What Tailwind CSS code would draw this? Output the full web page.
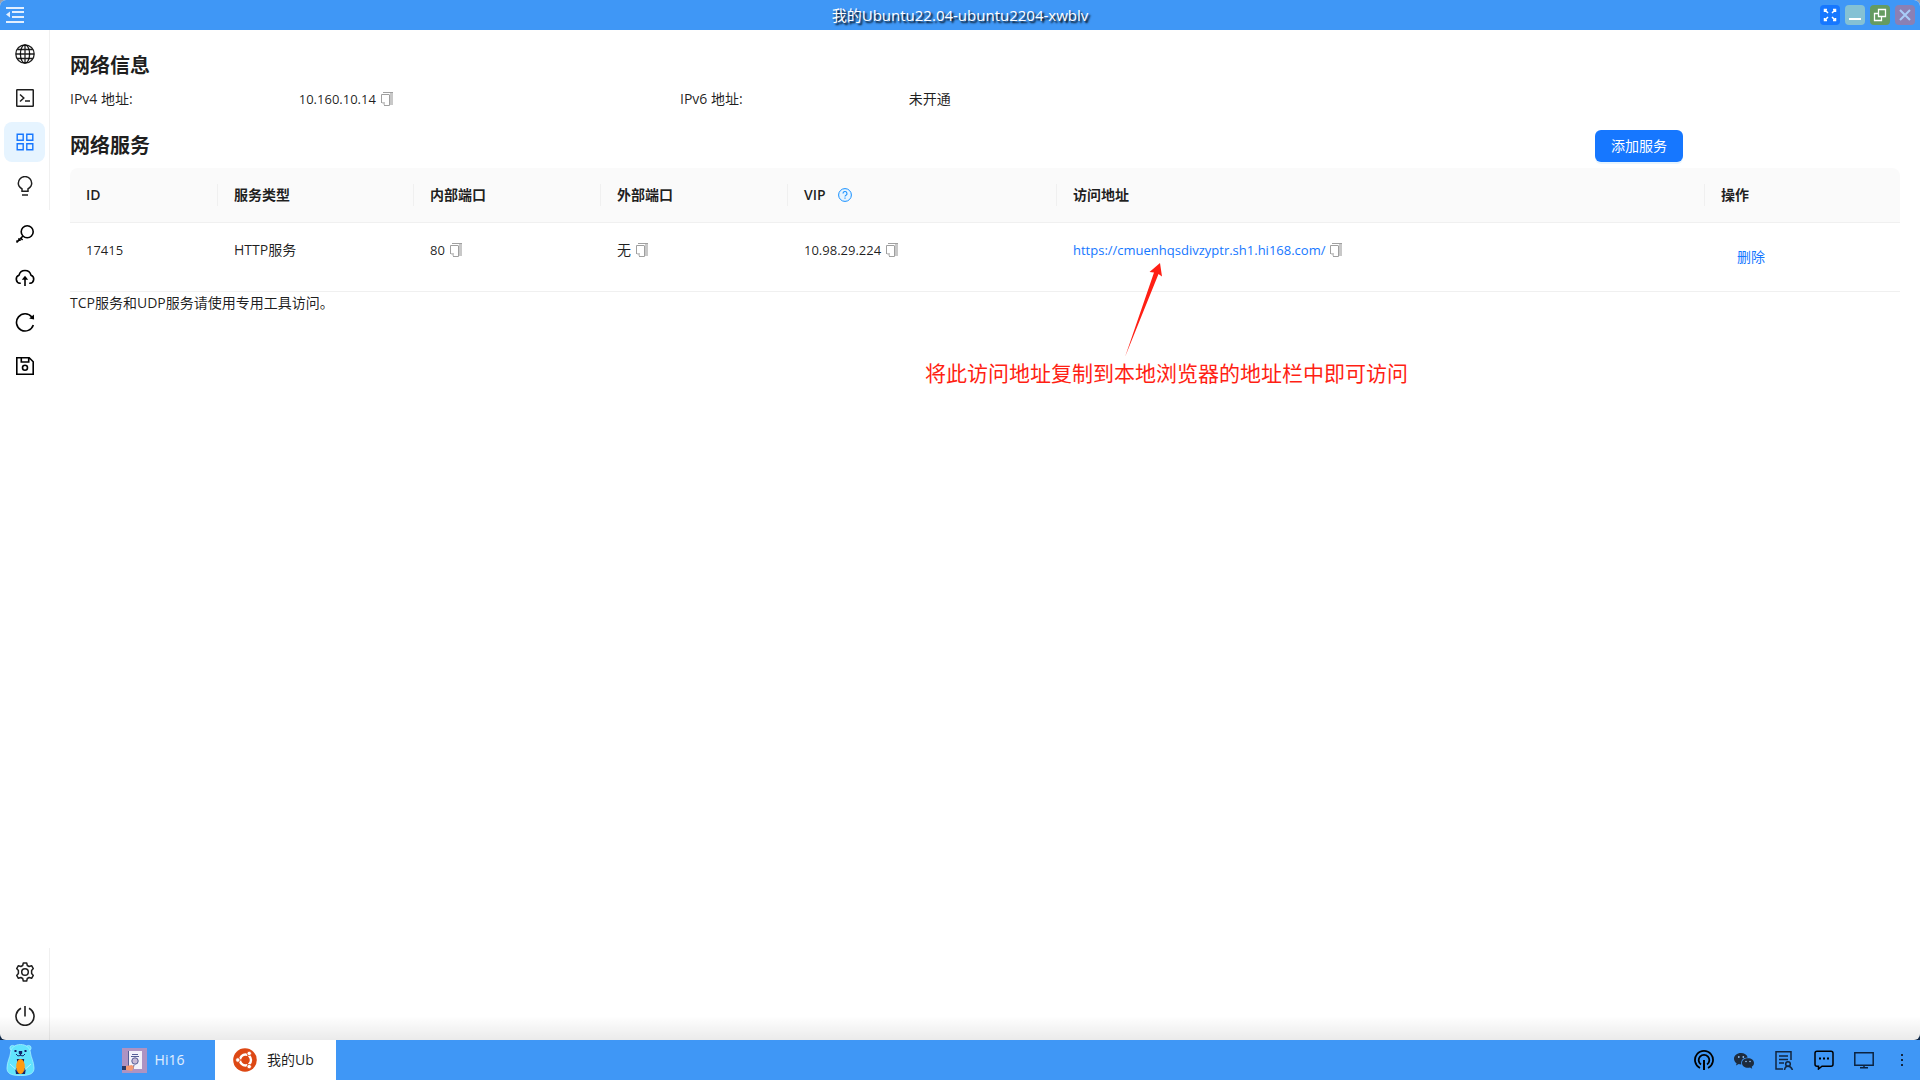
<!DOCTYPE html>
<html lang="zh-CN">
<head>
    <meta charset="UTF-8">
    <meta name="viewport" content="width=device-width, initial-scale=1.0">
    <title>我的Ubuntu22.04</title>
    <script src="https://cdn.jsdelivr.net/npm/@tailwindcss/browser@4"></script>
</head>
<body class="h-screen flex flex-col bg-linear-to-b from-gray-400 to-[#0b2545] font-['Open_Sans','Noto_Sans_CJK_SC',sans-serif] text-sm leading-[22px] text-black/88">
    <svg class="hidden">
        <symbol id="copy" viewBox="0 0 12 14">
            <path fill="#c8c8c8" d="M9 0h3v13H9zM0 10h4v4z"/>
            <path fill="none" stroke="#a0a0a0" d="M2 .5h10M.5 11V2.500h8"/>
            <path fill="none" stroke="#a0a0a0" d="M8.500 3v10.500H3"/>
        </symbol>
    </svg>

    <!-- window -->
    <div class="relative flex-1 min-h-0 flex flex-col rounded-md overflow-hidden bg-white">
        <header class="h-[30px] shrink-0 flex items-center justify-between px-[5px] bg-[#3f97f6]">
            <button class="w-[100px] text-white/85" aria-label="折叠菜单">
                <svg class="size-5" viewBox="0 0 20 20" fill="currentColor"><path d="M1 2h18v2H1zM7 6h12v2H7zM7 11h12v2H7zM1 16h18v2H1zM1 9.500l4-3v6z"/></svg>
            </button>
            <h1 class="text-[15px] text-white [text-shadow:2px_2px_2px_#000]">我的Ubuntu22.04-ubuntu2204-xwblv</h1>
            <div class="w-[100px] flex justify-end gap-[5px]">
                <button class="size-5 rounded bg-[#1677ff] text-white" aria-label="全屏">
                    <svg class="size-5" viewBox="0 0 20 20" fill="none" stroke="currentColor" stroke-width="1.500"><path d="M8 8L5 5M12 8l3-3M8 12l-3 3M12 12l3 3M4.500 7V4.500H7M13 4.500h2.500V7M4.500 13v2.500H7M13 15.500h2.500V13"/></svg>
                </button>
                <button class="size-5 rounded bg-[#84c1d4] text-white" aria-label="最小化">
                    <svg class="size-5" viewBox="0 0 20 20" fill="currentColor"><path d="M4 13h12v2H4z"/></svg>
                </button>
                <button class="size-5 rounded bg-[#659b60] text-white" aria-label="还原">
                    <svg class="size-5" viewBox="0 0 20 20" fill="none" stroke="currentColor" stroke-width="1.300"><path d="M8.500 4.500h7v7h-7zM11.500 11.500v4h-7v-7h4"/></svg>
                </button>
                <button class="size-5 rounded bg-[#8a80b4] text-[#a9cdf8]" aria-label="关闭">
                    <svg class="size-5" viewBox="0 0 20 20" fill="none" stroke="currentColor" stroke-width="2"><path d="M5 5l10 10M15 5L5 15"/></svg>
                </button>
            </div>
        </header>

        <div class="flex-1 min-h-0 flex">
            <!-- side menu -->
            <nav class="w-[50px] shrink-0 flex flex-col text-black/88">
                <div class="h-[180px] flex flex-col gap-1 pt-1 pl-1 pr-1 border-r border-[#f0f0f0]">
                    <button class="h-10 flex items-center justify-center rounded-lg" aria-label="网络">
                        <svg class="size-5" viewBox="0 0 20 20" fill="none" stroke="currentColor" stroke-width="1.300"><circle cx="10" cy="10" r="9.200"/><ellipse cx="10" cy="10" rx="4.600" ry="9.200"/><path d="M10 1v18M1 10h18M2.500 5.500h15M2.500 14.500h15"/></svg>
                    </button>
                    <button class="h-10 flex items-center justify-center rounded-lg" aria-label="终端">
                        <svg class="size-5" viewBox="0 0 20 20" fill="none" stroke="currentColor" stroke-width="1.500"><rect x="1.750" y="1.750" width="16.500" height="16.500" rx=".5"/><path d="M5 6.500L8.800 10 5 13.500M10 13h5"/></svg>
                    </button>
                    <button class="h-10 flex items-center justify-center rounded-lg bg-[#e6f4ff] text-[#1677ff]" aria-label="服务">
                        <svg class="size-5" viewBox="0 0 20 20" fill="none" stroke="currentColor" stroke-width="1.400"><path d="M2.200 2.200h6v6h-6zM11.800 2.200h6v6h-6zM2.200 11.800h6v6h-6zM11.800 11.800h6v6h-6z"/></svg>
                    </button>
                    <button class="h-10 flex items-center justify-center rounded-lg" aria-label="提示">
                        <svg class="size-5" viewBox="0 0 20 20" fill="none" stroke="currentColor" stroke-width="1.500"><path d="M7 15.200V12.800C5 11.700 3.300 9.800 3.300 7.300a6.700 6.700 0 0 1 13.400 0c0 2.500-1.700 4.400-3.700 5.500v2.400zM7 19h6"/></svg>
                    </button>
                </div>
                <div class="flex flex-col gap-1 pt-1 px-1 text-black">
                    <button class="h-10 flex items-center justify-center" aria-label="密钥">
                        <svg class="size-5" viewBox="0 0 20 20" fill="none" stroke="currentColor" stroke-width="1.600"><circle cx="12.200" cy="7.800" r="6"/><path d="M8 12l-6.500 6.500M5.800 14.200L7.600 16M3.300 14.500l2.200 2.200M1.500 16.500l1.800 1.500"/></svg>
                    </button>
                    <button class="h-10 flex items-center justify-center" aria-label="上传">
                        <svg class="size-5" viewBox="0 0 20 20" fill="none" stroke="currentColor" stroke-width="1.600"><path d="M5.800 15.300H5A4.200 4.200 0 0 1 4 7.200 6.200 6.200 0 0 1 16 7.200a4.200 4.200 0 0 1-1 8.100h-.8M10 18V10"/><path fill="currentColor" stroke="none" d="M10 7.700l3.200 4H6.800z"/></svg>
                    </button>
                    <button class="h-10 flex items-center justify-center" aria-label="刷新">
                        <svg class="size-5" viewBox="0 0 20 20" fill="none" stroke="currentColor" stroke-width="1.600"><path d="M18.300 13a8.600 8.600 0 1 1-1.500-8"/><path fill="currentColor" stroke="none" d="M18.900 2.600l.2 5-4.900-1.100z"/></svg>
                    </button>
                    <button class="h-10 flex items-center justify-center" aria-label="保存">
                        <svg class="size-5" viewBox="0 0 20 20" fill="none" stroke="currentColor" stroke-width="1.600"><path d="M1.800 1.800h12.400l4 4v12.400H1.800zM6.300 2v4h7.400V2"/><circle cx="10" cy="11.800" r="2.500"/></svg>
                    </button>
                </div>
                <div class="mt-auto h-[92px] flex flex-col gap-1 pt-1 pl-1 pr-1 border-r border-[#f0f0f0]">
                    <button class="h-10 flex items-center justify-center" aria-label="设置">
                        <svg class="size-5" viewBox="0 0 20 20" fill="none" stroke="currentColor" stroke-width="1.500" stroke-linejoin="round"><path d="M8.300 1h3.400l.6 2.500 1.800 1 2.500-.8 1.700 2.900L16.600 8.500v3l1.700 1.900-1.700 2.900-2.500-.8-1.800 1-.6 2.500H8.300l-.6-2.500-1.800-1-2.500.8-1.700-2.900 1.700-1.900v-3L1.700 6.600l1.700-2.900 2.500.8 1.800-1z"/><circle cx="10" cy="10" r="3.300"/></svg>
                    </button>
                    <button class="h-10 flex items-center justify-center" aria-label="电源">
                        <svg class="size-5" viewBox="0 0 20 20" fill="none" stroke="currentColor" stroke-width="1.600"><path d="M6 2.300a9 9 0 1 0 8 0M10 0v10.500"/></svg>
                    </button>
                </div>
            </nav>

            <main class="flex-1 px-5 pt-5">
                <h2 class="text-xl leading-8 font-bold">网络信息</h2>
                <dl class="grid grid-cols-24 pt-1.5">
                    <dt class="col-span-3">IPv4 地址:</dt>
                    <dd class="col-span-5 flex items-center gap-[5px]"><span class="text-[13px]">10.160.10.14</span><button aria-label="复制"><svg class="w-3 h-3.5"><use href="#copy"/></svg></button></dd>
                    <dt class="col-span-3">IPv6 地址:</dt>
                    <dd class="col-span-5">未开通</dd>
                </dl>
                <div class="grid grid-cols-24 pt-5">
                    <h2 class="col-span-20 text-xl leading-8 font-bold">网络服务</h2>
                    <button class="w-[88px] h-8 rounded-md bg-[#1677ff] text-white shadow-[0_2px_0_rgba(5,145,255,0.1)]">添加服务</button>
                </div>

                <table class="mt-1.5 w-full table-fixed border-separate border-spacing-0 text-left">
                    <colgroup>
                        <col class="w-[148px]">
                        <col class="w-[196px]">
                        <col class="w-[187px]">
                        <col class="w-[187px]">
                        <col class="w-[269px]">
                        <col>
                        <col class="w-[195px]">
                    </colgroup>
                    <thead>
                        <tr class="bg-[#fafafa] *:border-b *:border-[#f0f0f0] *:py-4 *:font-semibold">
                            <th class="rounded-tl-lg"><div class="px-4 border-r border-[#f0f0f0]">ID</div></th>
                            <th><div class="px-4 border-r border-[#f0f0f0]">服务类型</div></th>
                            <th><div class="px-4 border-r border-[#f0f0f0]">内部端口</div></th>
                            <th><div class="px-4 border-r border-[#f0f0f0]">外部端口</div></th>
                            <th>
                                <div class="px-4 border-r border-[#f0f0f0] flex items-center gap-3">VIP
                                    <button aria-label="帮助"><svg class="size-3.5" viewBox="0 0 14 14" fill="none" stroke="#1890ff"><circle cx="7" cy="7" r="6.400" fill="#e6f4ff"/><path stroke-width="1.100" d="M5 5.600a2 2 0 1 1 2.700 1.800q-.7.300-.7 1.200M7 9.500v1.200"/></svg></button>
                                </div>
                            </th>
                            <th><div class="px-4 border-r border-[#f0f0f0]">访问地址</div></th>
                            <th class="rounded-tr-lg"><div class="px-4">操作</div></th>
                        </tr>
                    </thead>
                    <tbody>
                        <tr class="align-top *:border-b *:border-[#f0f0f0] *:p-4">
                            <td class="text-[13px]">17415</td>
                            <td>HTTP服务</td>
                            <td><div class="flex items-center gap-[5px]"><span class="text-[13px]">80</span><button aria-label="复制"><svg class="w-3 h-3.5"><use href="#copy"/></svg></button></div></td>
                            <td><div class="flex items-center gap-[5px]"><span>无</span><button aria-label="复制"><svg class="w-3 h-3.5"><use href="#copy"/></svg></button></div></td>
                            <td><div class="flex items-center gap-[5px]"><span class="text-[13px]">10.98.29.224</span><button aria-label="复制"><svg class="w-3 h-3.5"><use href="#copy"/></svg></button></div></td>
                            <td><div class="flex items-center gap-[5px]"><a href="https://cmuenhqsdivzyptr.sh1.hi168.com/" class="text-[13px] text-[#1677ff]">https://cmuenhqsdivzyptr.sh1.hi168.com/</a><button aria-label="复制"><svg class="w-3 h-3.5"><use href="#copy"/></svg></button></div></td>
                            <td><button class="h-9 px-4 text-[#1677ff]">删除</button></td>
                        </tr>
                    </tbody>
                </table>
                <p>TCP服务和UDP服务请使用专用工具访问。</p>
            </main>
        </div>

        <!-- annotation -->
        <div class="absolute left-[925px] top-[263px] text-[#ff1f14]">
            <svg class="ml-[200px] w-[38px] h-[94px]" viewBox="0 0 38 94" fill="currentColor"><path d="M35 0L24.500 9l4.500.5L0 94 33.500 11l3.500 2.500z"/></svg>
            <p class="text-[21px] leading-8 whitespace-nowrap">将此访问地址复制到本地浏览器的地址栏中即可访问</p>
        </div>
        <div class="absolute inset-x-0 bottom-0 h-6 bg-linear-to-b from-transparent to-black/8 pointer-events-none"></div>
    </div>

    <!-- taskbar -->
    <footer class="h-10 shrink-0 flex items-center bg-[#3f97f6]">
        <button class="w-[95px] pl-1.5" aria-label="开始">
            <svg class="w-[29px] h-8" viewBox="0 0 29 32">
                <g fill="#62e4fd" stroke="#a5f0ff" stroke-width=".8"><circle cx="6.500" cy="4" r="2.600"/><circle cx="22.500" cy="4" r="2.600"/><path d="M14.500.5C9 .5 5 3.500 4.500 9c-.3 4-3.500 9-3.500 15 0 5 3 7.500 13.500 7.500S28 29 28 24c0-6-3.200-11-3.500-15C24 3.500 20 .5 14.500.5z"/></g>
                <path fill="#12246b" d="M8.500 6h2v2h-2zM18.500 6h2v2h-2zM12.800 7h3.400v2.500l-1.200 1v1h-1v-1l-1.200-1z"/>
                <path fill="none" stroke="#12246b" d="M10 10q1.500 3 4.500 1.500 3 1.500 4.500-1.500"/>
                <path fill="#12246b" d="M11 15h7l2 9-1 6h-9l-1-6z"/>
                <path fill="#62e4fd" d="M4 17l7-1v8l-3 2zM25 17l-7-1v8l3 2z"/>
                <ellipse cx="14.500" cy="22.500" rx="4.300" ry="7.500" fill="#ff9b12"/>
                <path fill="none" stroke="#b5f3ff" d="M4 20l6.500 6M25 20l-6.500 6"/>
            </svg>
        </button>
        <button class="w-[120px] h-10 pr-1 flex items-center justify-center gap-2 text-white/85">
            <svg class="size-[25px]" viewBox="0 0 25 25"><path fill="#ae93c2" d="M0 0h25v25H0z"/><path fill="#f3f1fa" d="M7 3h13v18H7z"/><path fill="#565e96" d="M6 3h1v16H6zM10 6h6v1h-6zM9 8h8v1H9z"/><circle cx="13" cy="13" r="3.200" fill="#c8b9d6" stroke="#565e96"/><path stroke="#565e96" d="M12 17l-1 4"/><path fill="#f59a73" d="M4 18l6-1 2 2-2 4-6-1z"/><path fill="#2b3a67" d="M0 18h4v4H0z"/></svg>
            <span>Hi16</span>
        </button>
        <button class="w-[121px] h-10 pr-1 flex items-center justify-center gap-2.5 bg-white text-black/88">
            <svg class="size-6" viewBox="0 0 24 24"><circle cx="12" cy="12" r="11.800" fill="#dd4814"/><circle cx="12.500" cy="12" r="5.500" fill="none" stroke="#fff" stroke-width="2.400"/><path stroke="#dd4814" stroke-width="1.200" d="M12.500 12H3M12.500 12l4.500-8M12.500 12l4.500 8"/><circle cx="12.500" cy="12" r="2.800" fill="#dd4814"/><g fill="#fff" stroke="#dd4814" stroke-width=".8"><circle cx="4.800" cy="12" r="2.200"/><circle cx="16.200" cy="5.400" r="2.200"/><circle cx="16.200" cy="18.600" r="2.200"/></g></svg>
            <span>我的Ub</span>
        </button>
        <div class="ml-auto mr-1.5 flex items-center gap-5 text-black">
            <button aria-label="广播"><svg class="size-5" viewBox="0 0 20 20" fill="none" stroke="currentColor" stroke-width="1.800"><path d="M6 18A9 9 0 1 1 14 18M7 14.500a5.300 5.300 0 1 1 6 0"/><path stroke-width="2" d="M10 10v10"/></svg></button>
            <button class="text-[#1d2b3d]" aria-label="微信"><svg class="size-5" viewBox="0 0 20 20" fill="currentColor"><path d="M7 3C3 3 0 5.500 0 8.700c0 1.900 1 3.500 2.600 4.500L2 15.500l2.700-1.400q1 .3 2.600.3C6.500 10 9.500 7.600 13.700 7.500 13 4.700 10.200 3 7 3z"/><path d="M14 8.300c-3.400 0-6 2-6 4.700s2.600 4.800 6 4.800q1 0 2-.3l2.200 1.200-.5-1.900c1.400-.9 2.300-2.200 2.300-3.800 0-2.700-2.600-4.700-6-4.700z"/><g fill="#8fbef3"><circle cx="4.800" cy="7" r=".9"/><circle cx="9.300" cy="7" r=".9"/><circle cx="12" cy="11.500" r=".8"/><circle cx="16" cy="11.500" r=".8"/></g></svg></button>
            <button class="text-[#12263f]" aria-label="工单"><svg class="size-5" viewBox="0 0 20 20" fill="none" stroke="currentColor" stroke-width="1.500"><path d="M9 19H2V1.700h15V10M5 6h9M5 9.500h9M5 13h5"/><circle cx="14" cy="14" r="2.300"/><path d="M10.500 20q.5-3.700 3.500-3.700t4.500 3.700"/></svg></button>
            <button aria-label="消息"><svg class="size-5" viewBox="0 0 20 20" fill="none" stroke="currentColor" stroke-width="1.500"><path d="M3 1.200h14q2 0 2 2v11q0 2-2 2H8L4.500 19v-2.800H3q-2 0-2-2v-11q0-2 2-2z"/><path stroke-width="2" d="M5 8.500h2M9 8.500h2M13 8.500h2"/></svg></button>
            <button class="text-[#0c2340]" aria-label="桌面"><svg class="size-5" viewBox="0 0 20 20" fill="none" stroke="currentColor" stroke-width="1.500"><path d="M.8 2.800h18.400v12.400H.8zM10 15v3M6 17.800h8"/></svg></button>
            <button class="text-[#12263f]" aria-label="更多"><svg class="size-5" viewBox="0 0 20 20" fill="currentColor"><path d="M7 4h2v2H7zM7 9h2v2H7zM7 14h2v2H7z"/></svg></button>
        </div>
    </footer>
</body>
</html>
